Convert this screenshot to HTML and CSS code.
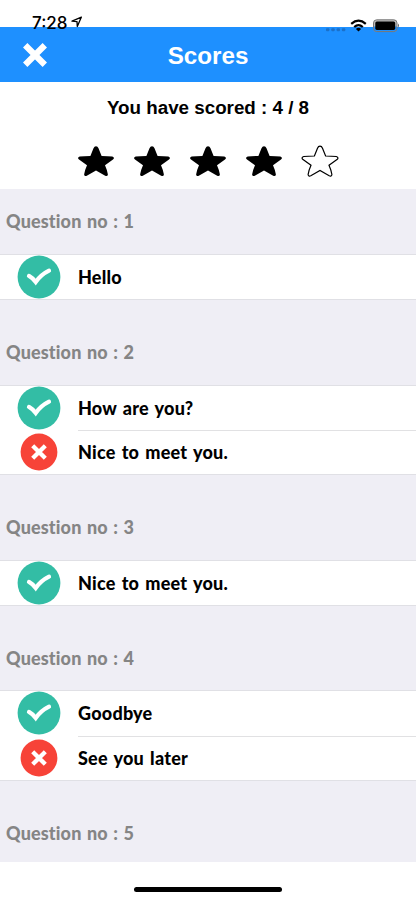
FILE: index.html
```
<!DOCTYPE html>
<html lang="en">
<head>
<meta charset="utf-8">
<meta name="viewport" content="width=device-width">
<title>Scores</title>
<link rel="stylesheet" href="styles.css">
</head>
<body>
<svg width="0" height="0" class="defs" aria-hidden="true">
  <symbol id="star" viewBox="0 0 38 32"><path d="M19 1.2Q20.7 1.2 21.5 3.2L24.6 11Q31 11 35.3 11.5Q38.2 12.6 36 14.6L28 20.2Q30.2 25 30.9 29.5Q30.6 31.7 28.2 30.8L19 25.4L9.8 30.8Q7.4 31.7 7.1 29.5Q7.8 25 10 20.2L2 14.6Q-.2 12.6 2.7 11.5Q7 11 13.4 11L16.5 3.2Q17.3 1.2 19 1.2Z"/></symbol>
  <symbol id="check" viewBox="0 0 44 44"><circle cx="22" cy="22" r="21.4" fill="#33bda5"/><path d="M12 20.9Q15.5 22.8 18.7 27Q24 19.5 32 15.6" fill="none" stroke="#fff" stroke-width="4.2" stroke-linecap="round" stroke-linejoin="miter"/></symbol>
  <symbol id="wrong" viewBox="0 0 44 44"><circle cx="22" cy="22" r="18.4" fill="#f74338"/><path d="M15.7 15.7L28.3 28.3M28.3 15.7L15.7 28.3" stroke="#fff" stroke-width="4.3" stroke-linecap="butt"/></symbol>
</svg>
<div class="screen">
  <div class="status">
    <span class="time">7:28</span>
    <svg class="arrow" width="12" height="12" viewBox="0 0 12 12"><path d="M1 5.2L10.4 1.1L6.3 10.5L6 5.6Z" fill="none" stroke="#000" stroke-width="1.3" stroke-linejoin="round"/></svg>
    <svg class="indicators" width="75" height="14" viewBox="0 0 75 14">
      <g fill="#1b70c9"><rect x="0" y="9.3" width="3.4" height="3" rx="1"/><rect x="5.3" y="9.3" width="3.4" height="3" rx="1"/><rect x="10.6" y="9.3" width="3.4" height="3" rx="1"/><rect x="15.9" y="9.3" width="3.4" height="3" rx="1"/></g>
      <g fill="none" stroke="#000" stroke-width="2.2"><path d="M25.2 4.8Q32.5 -1.5 39.8 4.8"/><path d="M28.2 8Q32.5 4.2 36.8 8"/></g><path d="M29.9 9.9Q32.5 7.8 35.1 9.9L32.5 12.6Z"/>
      <rect x="47.5" y=".8" width="23.5" height="11.8" rx="3.2" fill="#bbb"/><path d="M47.5 7.5H71V9.4A3.2 3.2 0 0 1 67.8 12.6H50.7A3.2 3.2 0 0 1 47.5 9.4Z" fill="#1e90ff"/><rect x="47.5" y=".8" width="23.5" height="11.8" rx="3.2" fill="none" stroke="#777" stroke-width="1"/>
      <rect x="49.3" y="2.5" width="19.9" height="8.4" rx="1.6"/><path d="M72 4.6Q74 6.6 72 8.6Z" fill="#666"/>
    </svg>
  </div>
  <header class="nav">
    <svg class="close" width="26" height="24" viewBox="0 0 26 24"><path d="M3.2 2.2L22.8 21.8M22.8 2.2L3.2 21.8" stroke="#fff" stroke-width="6.2"/></svg>
    <h1>Scores</h1>
  </header>
  <div class="summary">
    <p>You have scored : 4 / 8</p>
    <div class="stars">
      <svg><use href="#star"/></svg><svg><use href="#star"/></svg><svg><use href="#star"/></svg><svg><use href="#star"/></svg><svg class="empty"><use href="#star"/></svg>
    </div>
  </div>
  <main class="list">
    <h2 class="first"><span>Question no : 1</span></h2>
    <div class="group"><div class="row"><svg><use href="#check"/></svg><p><span>Hello</span></p></div></div>
    <h2><span>Question no : 2</span></h2>
    <div class="group"><div class="row"><svg><use href="#check"/></svg><p><span>How are you?</span></p></div>
    <div class="row"><svg><use href="#wrong"/></svg><p><span>Nice to meet you.</span></p></div></div>
    <h2><span>Question no : 3</span></h2>
    <div class="group"><div class="row"><svg><use href="#check"/></svg><p><span>Nice to meet you.</span></p></div></div>
    <h2><span>Question no : 4</span></h2>
    <div class="group"><div class="row"><svg><use href="#check"/></svg><p><span>Goodbye</span></p></div>
    <div class="row"><svg><use href="#wrong"/></svg><p><span>See you later</span></p></div></div>
    <h2><span>Question no : 5</span></h2>
  </main>
  <footer><div class="home"></div></footer>
</div>
</body>
</html>
```
FILE: styles.css
```
* { box-sizing: border-box; }
body { margin: 0; background: #fff; color: #000; font-family: Lato, sans-serif; }
h1, h2, p { margin: 0; }
.defs { position: absolute; }
.screen { height: 900px; display: flex; flex-direction: column; overflow: hidden; }
.status { height: 26.5px; flex: none; display: flex; align-items: flex-start; padding: 14px 15px 0 32px; position: relative; z-index: 1; }
.time { font: 500 17px/18px Inter, sans-serif; letter-spacing: 0; }
.arrow { margin: 2px 0 0 4px; }
.indicators { margin: 5px 0 0 auto; flex: none; }
.nav { height: 55.5px; flex: none; background: #1e90ff; display: grid; grid-template-columns: 60px 1fr 60px; align-items: center; }
.close { margin: 2px 0 0 22.4px; }
.nav h1 { color: #fff; text-align: center; font: 700 24.2px/30px "Liberation Sans", sans-serif; margin-top: 3px; }
.summary { height: 107px; flex: none; text-align: center; padding-top: 14px; }
.summary p { font: 700 18.8px/24px "Liberation Sans", sans-serif; }
.stars { display: flex; justify-content: center; gap: 18.2px; margin-top: 24.6px; }
.stars svg { width: 38px; height: 32px; }
.stars .empty { fill: #fff; stroke: #000; stroke-width: 1.2; }
.list { height: 673px; flex: none; background: #efeef5; overflow: hidden; }
h2 { height: 86.4px; padding: 40px 0 0 6px; font-size: 18px; line-height: 26px; font-weight: 900; color: #858585; font-variant-ligatures: none; word-spacing: 1px; letter-spacing: .14px; }
h2.first { height: 66px; padding-top: 19px; }
.group { background: #fff; box-shadow: 0 -1px #e0e0e5, 0 1px #e0e0e5; }
.row { height: 44.3px; display: flex; }
.row svg { width: 44px; height: 44px; margin-left: 17px; flex: none; }
.row p { flex: 1; margin-left: 17px; font-size: 18px; line-height: 44px; font-weight: 900; word-spacing: 1.6px; letter-spacing: .22px; }
.row + .row p { box-shadow: inset 0 1px #e1e1e3; }
footer { flex: 1; display: flex; justify-content: center; }
.home { width: 148px; height: 5px; border-radius: 3px; background: #000; margin-top: 24.5px; }
```
